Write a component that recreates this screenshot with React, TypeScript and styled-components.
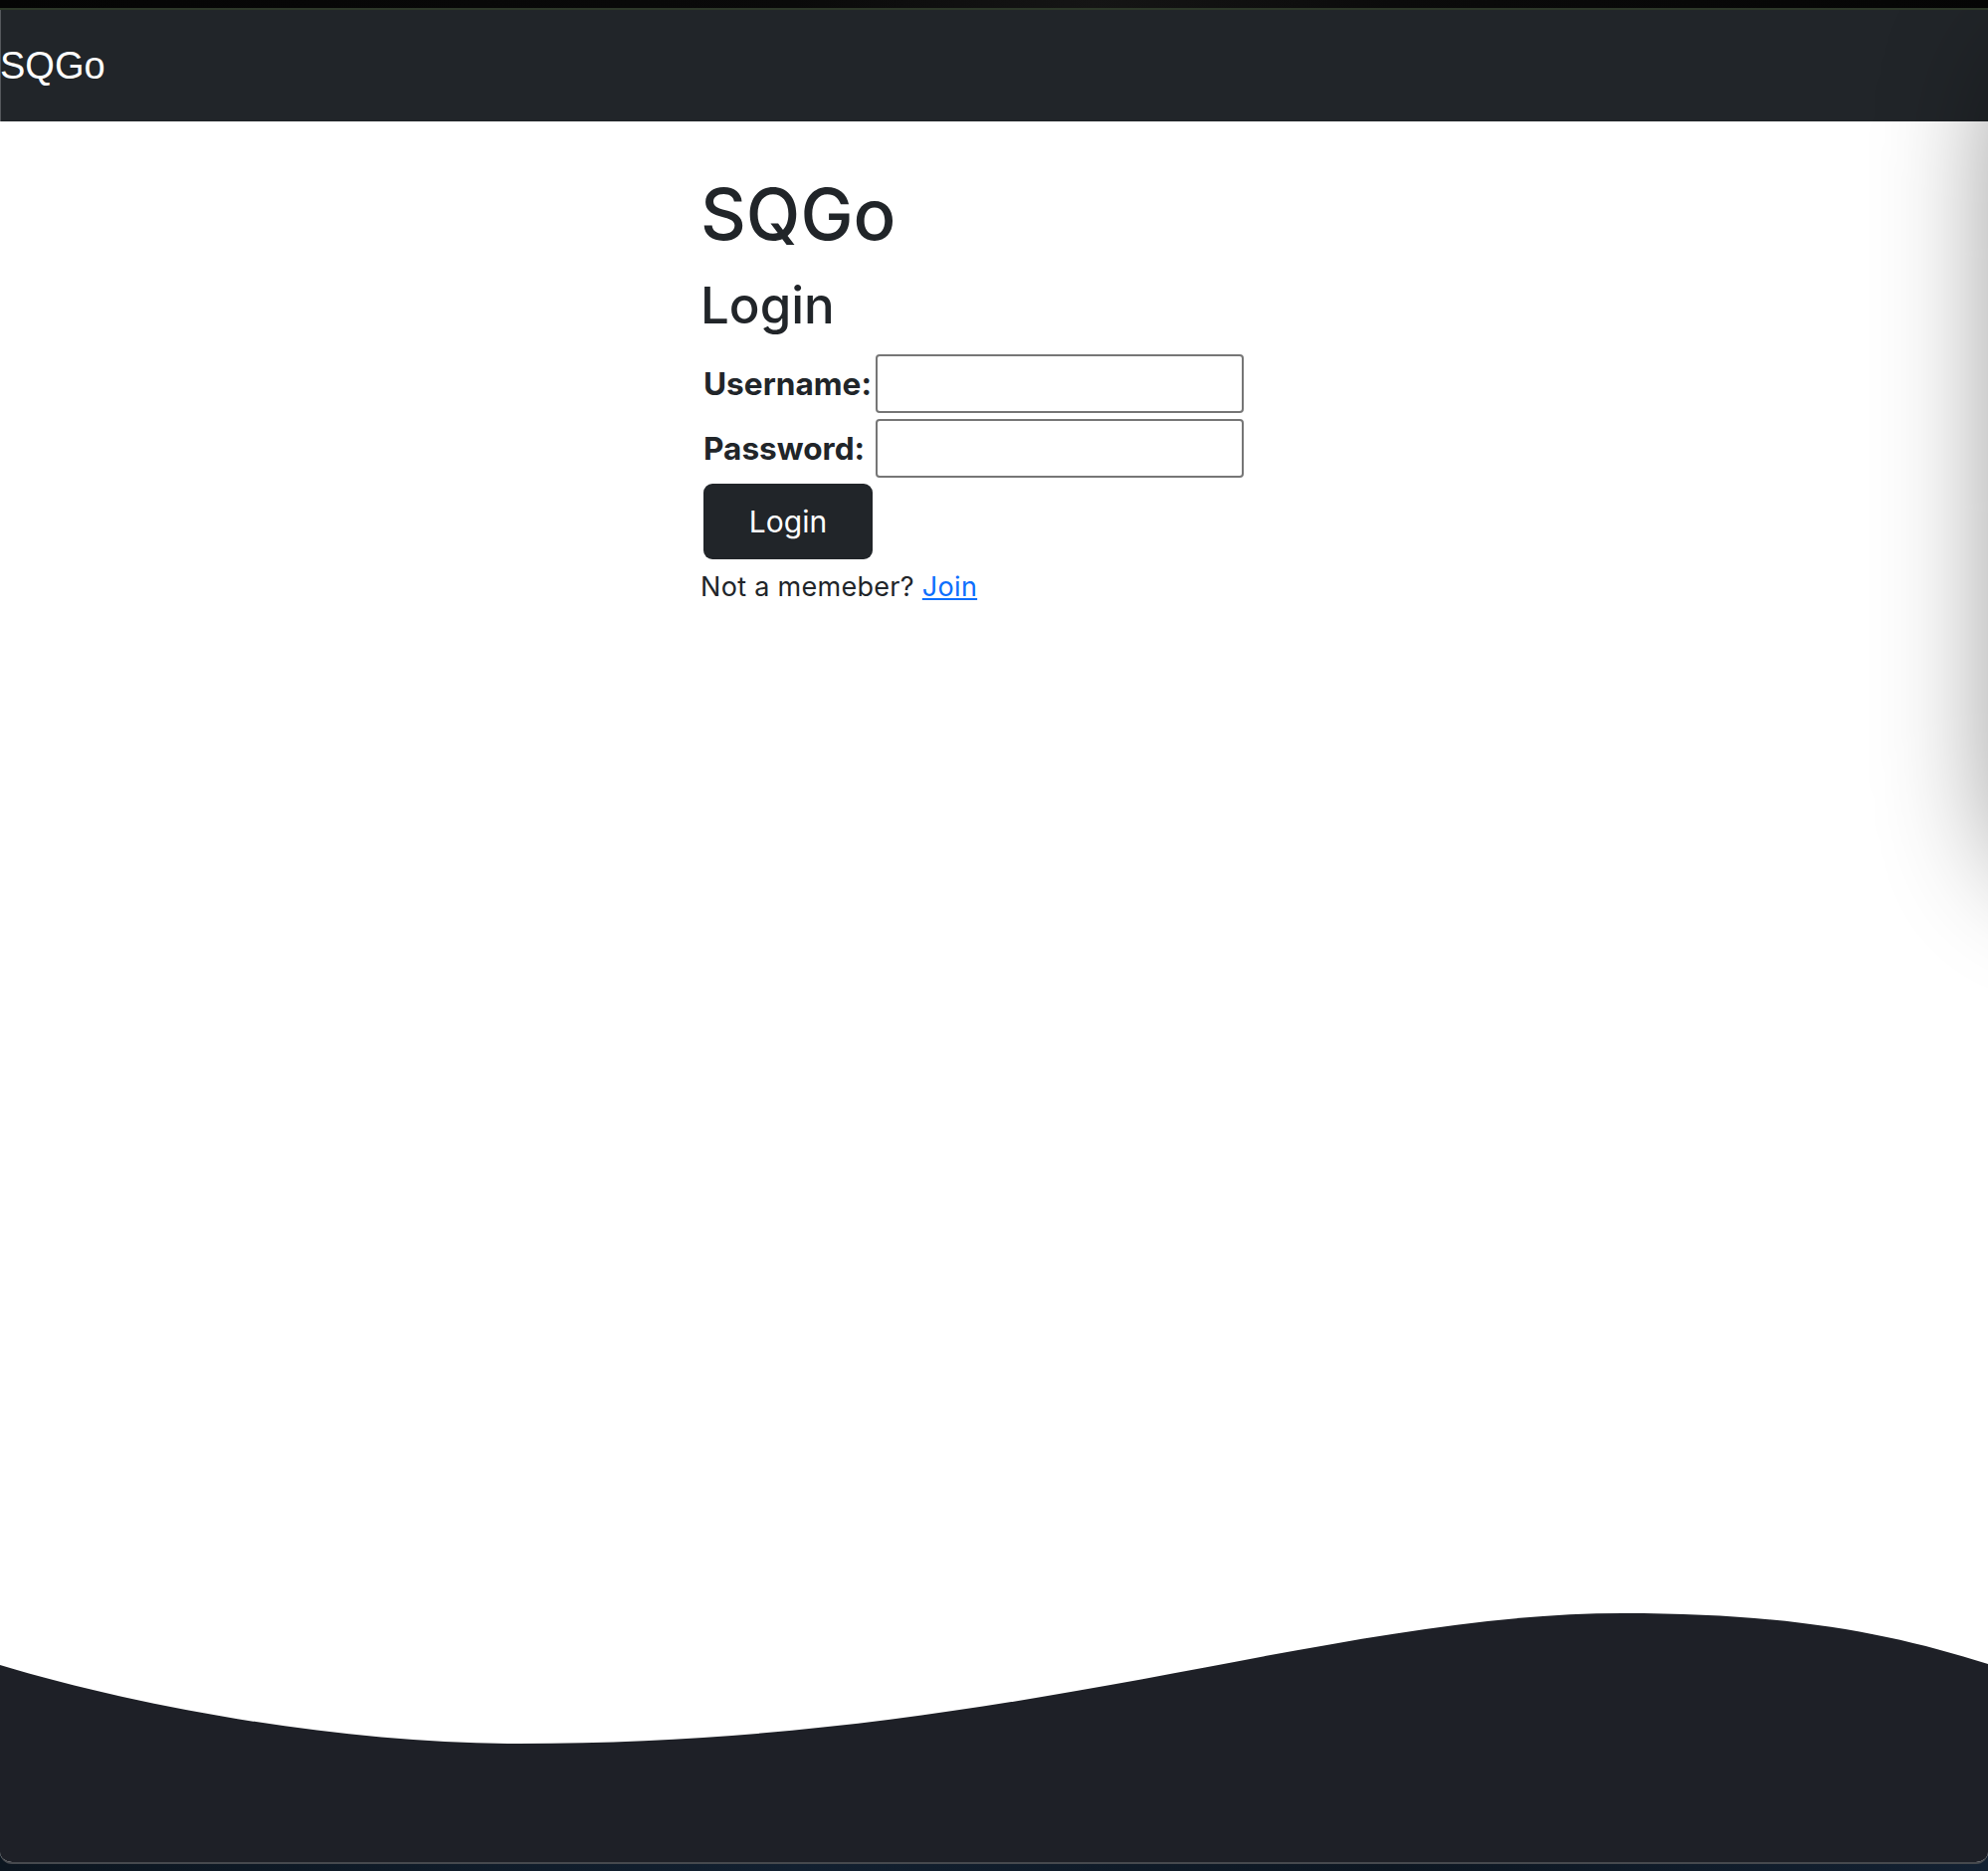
import React from "react";
import styled, { createGlobalStyle } from "styled-components";

const GlobalStyle = createGlobalStyle`
  html, body { margin: 0; padding: 0; }
  body {
    background: #0e1822;
    font-family: Inter, "Noto Sans", sans-serif;
    color: #212529;
  }
  #root { width: 1998px; height: 1880px; }
`;

const Page = styled.div`
  width: 1998px;
  height: 1880px;
  display: flex;
  flex-direction: column;
  overflow: hidden;
  background: linear-gradient(90deg, #0c1620, #122030 40%, #0d1722 70%, #132132);
`;

const TopStrip = styled.div`
  height: 8px;
  flex: none;
  background: linear-gradient(90deg, #050505, #0a0a0a 40%, #151515 55%, #0b0b0b 70%, #050505);
`;

const Window = styled.div`
  flex: 1;
  display: flex;
  flex-direction: column;
  position: relative;
  overflow: hidden;
  background: #ffffff;
  border-top: 2px solid #2d3829;
  border-bottom: 2px solid #46494e;
  border-radius: 0 0 12px 12px;
  margin-bottom: 7px;
`;

const Navbar = styled.nav`
  height: 112px;
  flex: none;
  display: flex;
  align-items: center;
  background: #212529;
  box-shadow: inset 1px 0 0 #55585c;
`;

const Brand = styled.a`
  color: #ffffff;
  font-family: "Liberation Sans", Arial, sans-serif;
  font-size: 38px;
  line-height: 1;
  text-decoration: none;
`;

const Main = styled.main`
  flex: 1;
  display: flex;
  flex-direction: column;
  align-items: flex-start;
  padding: 51px 0 0 704px;
`;

const Title = styled.h1`
  margin: 0;
  font-size: 71px;
  font-weight: 500;
  line-height: 1.2;
`;

const Subtitle = styled.h2`
  margin: 18px 0 0;
  font-size: 51px;
  font-weight: 500;
  line-height: 1.2;
`;

const FormGrid = styled.form`
  margin-top: 19px;
  display: grid;
  grid-template-columns: max-content 370px;
  column-gap: 3px;
  row-gap: 6px;
  align-items: center;
`;

const Label = styled.label`
  font-size: 31.6px;
  font-weight: 700;
  padding-left: 3px;
`;

const Input = styled.input`
  box-sizing: border-box;
  width: 370px;
  height: 59px;
  border: 2px solid #767676;
  border-radius: 4px;
  background: #fff;
  font-size: 26px;
  padding: 4px 8px;
  margin: 0;
`;

const SubmitButton = styled.button`
  grid-column: 1;
  justify-self: start;
  margin-left: 3px;
  width: 170px;
  height: 76px;
  border: none;
  border-radius: 9px;
  background: #212529;
  color: #ffffff;
  font-family: Inter, "Noto Sans", sans-serif;
  font-size: 30px;
  font-weight: 400;
  cursor: pointer;
`;

const JoinText = styled.p`
  margin: 8px 0 0 0;
  font-size: 27px;
  letter-spacing: 0.3px;
  line-height: 1.5;
`;

const JoinLink = styled.a`
  color: #0d6efd;
  text-decoration: underline;
`;

const Footer = styled.footer`
  height: 250px;
  flex: none;
  display: block;
  svg { display: block; }
`;

const SideShadow = styled.div`
  position: absolute;
  left: calc(100% + 12px);
  top: 20px;
  width: 300px;
  height: 860px;
  border-radius: 90px;
  box-shadow: 0 0 120px rgba(0, 0, 0, 0.45);
  pointer-events: none;
`;

export default function App() {
  return (
    <>
      <GlobalStyle />
      <Page>
        <TopStrip />
        <Window>
          <Navbar>
            <Brand href="#">SQGo</Brand>
          </Navbar>
          <Main>
            <Title>SQGo</Title>
            <Subtitle>Login</Subtitle>
            <FormGrid onSubmit={(e) => e.preventDefault()}>
              <Label htmlFor="username">Username:</Label>
              <Input id="username" type="text" />
              <Label htmlFor="password">Password:</Label>
              <Input id="password" type="password" />
              <SubmitButton type="submit">Login</SubmitButton>
            </FormGrid>
            <JoinText>
              Not a memeber? <JoinLink href="#">Join</JoinLink>
            </JoinText>
          </Main>
          <Footer>
            <svg width="1998" height="250" viewBox="0 0 1998 250" preserveAspectRatio="none">
              <path
                d="M0,52 C150,97 350,131 522,131 C1022,131 1331,0 1631,0 C1800,0 1900,20 1998,51 L1998,250 L0,250 Z"
                fill="#1e2027"
              />
            </svg>
          </Footer>
          <SideShadow />
        </Window>
      </Page>
    </>
  );
}
